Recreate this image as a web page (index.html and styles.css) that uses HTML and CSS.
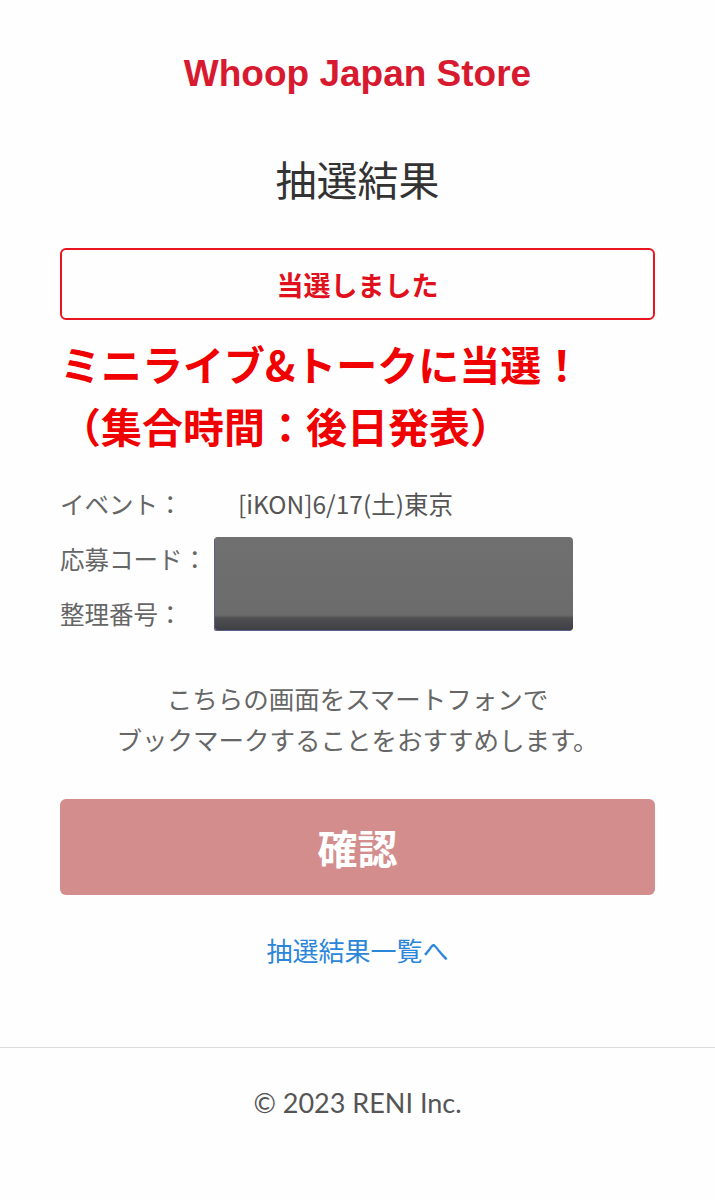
FILE: index.html
```html
<!DOCTYPE html>
<html lang="ja">
<head>
  <meta charset="UTF-8" />
  <title>抽選結果 | Whoop Japan Store</title>
  <link rel="stylesheet" href="styles.css">
</head>
<body>

<header class="site-header">
  <div class="logo">Whoop Japan Store</div>
</header>

<main class="content">
  <h1 class="page-title">抽選結果</h1>

  <div class="result-box">当選しました</div>

  <p class="result-message">ミニライブ&amp;トークに当選！<br>（集合時間：後日発表）</p>

  <div class="info">
    <div class="info-row">
      <span class="info-label">イベント：</span>
      <span class="info-value">[iKON]6/17(土)東京</span>
    </div>
    <div class="info-row">
      <span class="info-label">応募コード：</span>
      <span class="info-value"></span>
    </div>
    <div class="info-row">
      <span class="info-label">整理番号：</span>
      <span class="info-value"></span>
    </div>
    <div class="redacted"></div>
  </div>

  <p class="note">こちらの画面をスマートフォンで<br>ブックマークすることをおすすめします。</p>

  <button class="confirm-btn">確認</button>

  <a class="list-link" href="#">抽選結果一覧へ</a>
</main>

<footer class="site-footer">
  <p>© 2023 RENI Inc.</p>
</footer>

</body>
</html>
```

FILE: styles.css
```css
body {
  margin: 0;
  background: #fefefe;
  font-family: "Noto Sans CJK JP", sans-serif;
  color: #333;
}

.site-header {
  padding-top: 52px;
  text-align: center;
}

.logo {
  font-family: "Liberation Sans", Arial, sans-serif;
  font-weight: bold;
  font-size: 37px;
  line-height: 44px;
  color: #d71a2f;
}

.content {
  padding: 0 60px 77px;
  text-align: center;
}

.page-title {
  margin: 52px 0 0;
  font-size: 41px;
  font-weight: normal;
  line-height: 60px;
  color: #333;
}

.result-box {
  margin-top: 40px;
  height: 72px;
  box-sizing: border-box;
  border: 2px solid #e8141f;
  border-radius: 6px;
  display: flex;
  align-items: center;
  justify-content: center;
  font-size: 27px;
  font-weight: bold;
  color: #e0101c;
}

.result-message {
  margin: 12px 0 0;
  text-align: left;
  font-size: 41px;
  font-weight: bold;
  line-height: 62px;
  color: #f00000;
}

.info {
  position: relative;
  margin-top: 20px;
  text-align: left;
  font-size: 24.5px;
  color: #666;
}

.info-row {
  display: grid;
  grid-template-columns: 178px 1fr;
  height: 55px;
  line-height: 55px;
}

.info-value {
  color: #555;
}

/* blacked out by whoever took the screenshot */
.redacted {
  position: absolute;
  top: 61px;
  left: 155px;
  width: 358px;
  height: 93px;
  border-radius: 2px 4px 2px 2px;
  background: linear-gradient(to bottom, #707070 0, #6b6b6b 84%, #4f4f52 87%, #3f4045 100%);
  box-shadow: -1px 1px 0 #5a5f8a;
}

.note {
  margin: 36px 0 0;
  font-size: 25.5px;
  line-height: 41px;
  color: #666;
}

.confirm-btn {
  display: block;
  width: 100%;
  height: 96px;
  margin-top: 40px;
  border: none;
  border-radius: 6px;
  background-color: #d48d8d;
  color: white;
  font-family: "Noto Sans CJK JP", sans-serif;
  font-size: 40px;
  font-weight: bold;
  cursor: pointer;
}

.list-link {
  display: block;
  margin-top: 35px;
  font-size: 26px;
  line-height: 40px;
  color: #2b86da;
  text-decoration: none;
}

.site-footer {
  border-top: 1px solid #dcdcdc;
  padding-top: 35px;
  text-align: center;
}

.site-footer p {
  margin: 0;
  font-family: Lato, sans-serif;
  font-size: 27px;
  line-height: 40px;
  color: #555;
}
```
